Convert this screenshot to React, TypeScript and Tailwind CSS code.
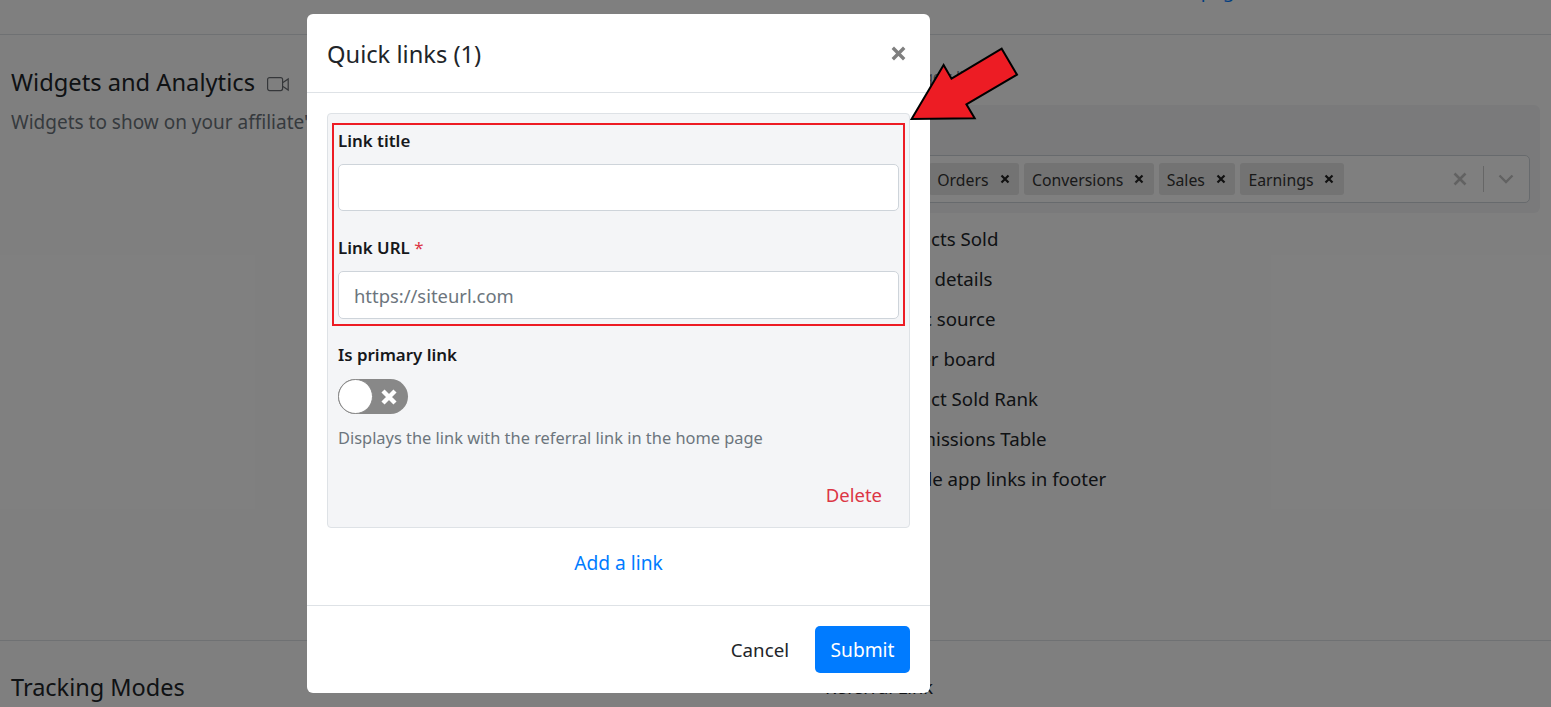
import React from "react";

const font = { fontFamily: '"Noto Sans", "Open Sans", sans-serif' };

function Tag({ label }: { label: string }) {
  return (
    <span className="flex h-[32px] items-center rounded-[3px] bg-[#e6e6e6] pl-[8px] pr-[9.5px] text-[15.8px] text-[#333]">
      <span className="pt-[3px]">{label}</span>
      <svg className="ml-[11px]" width="10" height="10" viewBox="0 0 10 10">
        <path d="M1.5 1.5l7 7M8.5 1.5l-7 7" stroke="#222" strokeWidth="2.2" />
      </svg>
    </span>
  );
}

const rows = ["Products Sold", "Order details", "Traffic source", "Leader board", "Product Sold Rank", "Commissions Table", "Disable app links in footer"];

export default function App() {
  return (
    <div style={font} className="relative h-[707px] w-[1551px] overflow-hidden bg-white text-[#212529]">
      {/* page underneath */}
      <div className="flex h-[35px] justify-end overflow-hidden border-b border-[#dee2e6] pr-[306px]">
        <span className="-mt-[24px] text-[18.8px] leading-[30px] text-[#007bff]">page</span>
      </div>
      <div className="grid h-[606px] grid-cols-[814px_1fr] border-b border-[#dee2e6] pl-[11px] pr-[21px] pt-[31px]">
        <div>
          <div className="flex items-center">
            <h2 className="text-[23.7px] leading-[32px]">Widgets and Analytics</h2>
            <svg className="ml-[12px] mt-[5px]" width="22" height="15" viewBox="0 0 22 15" fill="none" stroke="#6b6f74" strokeWidth="1.2">
              <rect x="0.6" y="0.6" width="15" height="13" rx="2" />
              <path d="M16 5.5l5.2-3.5v11L16 9.5" />
            </svg>
          </div>
          <p className="mt-[11px] whitespace-nowrap text-[19px] leading-[27px] text-[#6c757d]">Widgets to show on your affiliate's dashboard</p>
        </div>
        <div>
          <div className="mt-[1px] text-[14px] leading-[20px] text-[#6c757d]">Dashboard widgets list</div>
          <div className="-mx-[10px] mt-[18px] h-[108px] rounded-[6px] bg-[#f4f5f7] px-[10px] pt-[50px]">
            <div className="flex h-[48px] items-center rounded-[5px] border border-[#ced4da] bg-white pl-[2px]">
              <div className="flex items-center gap-[5px] pl-[16px]">
                <Tag label="Clicks" />
                <Tag label="Orders" />
                <Tag label="Conversions" />
                <Tag label="Sales" />
                <Tag label="Earnings" />
              </div>
              <div className="ml-auto flex items-center">
                <svg width="14" height="14" viewBox="0 0 14 14">
                  <path d="M1.5 1.5l11 11M12.5 1.5l-11 11" stroke="#c4c4c4" strokeWidth="2.6" />
                </svg>
                <span className="ml-[16px] h-[26px] w-px bg-[#ccc]" />
                <svg className="ml-[14px] mr-[15px]" width="16" height="10" viewBox="0 0 16 10" fill="none">
                  <path d="M1.5 1.5L8 8l6.5-6.5" stroke="#c4c4c4" strokeWidth="2.4" />
                </svg>
              </div>
            </div>
          </div>
          <ul className="mt-[6px] whitespace-nowrap pl-[53px] text-[18.7px] leading-[40px] text-[#212529]">
            {rows.map((r) => (
              <li key={r}>{r}</li>
            ))}
          </ul>
        </div>
      </div>
      <div className="grid grid-cols-[814px_1fr] pl-[11px] pt-[30px]">
        <h2 className="text-[23.5px] leading-[32px]">Tracking Modes</h2>
        <div className="text-[18.3px] leading-[32px]">Referral Link</div>
      </div>

      {/* backdrop */}
      <div className="absolute inset-0 bg-black/50" />

      {/* modal */}
      <div className="absolute left-[307px] top-[14px] flex h-[679px] w-[623px] flex-col rounded-[6px] bg-white">
        <div className="flex h-[79px] shrink-0 items-center justify-between border-b border-[#dee2e6] pl-[20px] pr-[24px]">
          <h3 className="pt-[2px] text-[23.7px] leading-[32px] text-[#212529]">Quick links (1)</h3>
          <svg width="15" height="15" viewBox="0 0 15 15">
            <path d="M1.8 1.8l11.4 11.4M13.2 1.8L1.8 13.2" stroke="#7f7f7f" strokeWidth="3.4" />
          </svg>
        </div>
        <div className="flex flex-1 flex-col px-[20px] pt-[20px]">
          <div className="h-[415px] rounded-[4px] border border-[#dee2e6] bg-[#f4f5f7] px-[4px] pt-[9px]">
            <div className="h-[203px] border-2 border-[#ed1c24] px-[4px] pt-[2px]">
              <div className="text-[16.9px] font-semibold leading-[28px] text-[#16181b]">Link title</div>
              <div className="mt-[9px] h-[47px] rounded-[5px] border border-[#ced4da] bg-white" />
              <div className="mt-[23px] text-[16.9px] font-semibold leading-[28px] text-[#16181b]">
                Link URL <span className="font-normal text-[#dc3545]">*</span>
              </div>
              <div className="mt-[9px] flex h-[48px] items-center rounded-[5px] border border-[#ced4da] bg-white pl-[15px] pt-[2px] text-[18.4px] text-[#6c757d]">
                https://siteurl.com
              </div>
            </div>
            <div className="px-[6px]">
              <div className="mt-[15px] text-[16.9px] font-semibold leading-[28px] text-[#16181b]">Is primary link</div>
              <div className="mt-[10px] flex h-[35px] w-[70px] items-center rounded-full bg-[#888]">
                <span className="h-[35px] w-[35px] rounded-full border border-[#888] bg-white" />
                <svg className="ml-[7px]" width="18" height="18" viewBox="0 0 18 18">
                  <path d="M3 3l12 12M15 3L3 15" stroke="#fff" strokeWidth="4.4" />
                </svg>
              </div>
              <p className="mt-[11px] whitespace-nowrap text-[16.4px] leading-[26px] text-[#6c757d]">Displays the link with the referral link in the home page</p>
              <div className="mt-[30px] pr-[17px] text-right text-[18.5px] leading-[28px] text-[#dc3545]">Delete</div>
            </div>
          </div>
          <div className="mt-[21px] text-center text-[19.2px] leading-[28px] text-[#007bff]">Add a link</div>
        </div>
        <div className="flex h-[88px] shrink-0 items-center justify-end border-t border-[#dee2e6] pr-[20px]">
          <span className="mr-[26px] pt-[2px] text-[18.7px] text-[#212529]">Cancel</span>
          <span className="flex h-[47px] w-[95px] items-center justify-center rounded-[5px] bg-[#007bff] pt-[2px] text-[19.2px] text-white">Submit</span>
        </div>
      </div>

      {/* annotation arrow */}
      <svg className="absolute left-0 top-0" width="1551" height="707" viewBox="0 0 1551 707">
        <polygon points="1001.7,48.7 1017,74.7 966.4,104.3 974.7,118.3 911.6,119 943.6,65 951.5,78.7" fill="#ed1c24" stroke="#000" strokeWidth="2" />
      </svg>
    </div>
  );
}
